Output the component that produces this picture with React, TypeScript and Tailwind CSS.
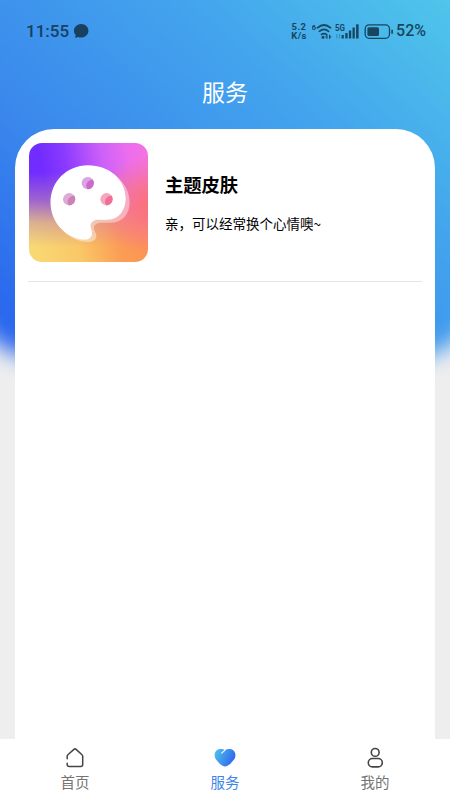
import React, { useState } from 'react';

const HomeIcon = () => (
  <svg width="22" height="22" viewBox="0 0 22 22" fill="none" stroke="#444" strokeWidth="1.5" strokeLinecap="round" strokeLinejoin="round">
    <path d="M3.2 11.8V9.2q0-.9.7-1.5L9.9 2.4q1.100-1 2.200 0l5.900 5.300q.7.6.7 1.500v8.400q0 2-2 2H5.200q-2 0-2-2V16.300" />
  </svg>
);

const HeartIcon = () => (
  <svg width="22" height="22" viewBox="0 0 22 22" fill="none">
    <defs>
      <linearGradient id="heart" x1="0" y1="4" x2="21" y2="14" gradientUnits="userSpaceOnUse">
        <stop stopColor="#4fc4ec" />
        <stop offset=".5" stopColor="#3f94ec" />
        <stop offset="1" stopColor="#2c63ee" />
      </linearGradient>
    </defs>
    <path d="M11 3.200C8.700 1.500 5 1.400 2.700 3.300.2 5.600-.1 9.600 2 12.600c1.700 2.500 4.400 4.900 6.600 6.200q2.400 1.300 4.800 0c2.300-1.300 4.900-3.700 6.600-6.200 2.100-3 1.900-7-.7-9.300C17 1.400 13.300 1.500 11 3.200Z" fill="url(#heart)" />
    <path d="M7.600 6.200 10.800 3.300" stroke="#fff" strokeWidth="1.100" strokeLinecap="round" />
  </svg>
);

const UserIcon = () => (
  <svg width="22" height="22" viewBox="0 0 22 22" fill="none" stroke="#444" strokeWidth="1.600">
    <circle cx="11.200" cy="5.400" r="3.900" />
    <rect x="4.300" y="11.500" width="14" height="8.400" rx="4.200" />
  </svg>
);

const ChatIcon = () => (
  <svg width="16" height="16" viewBox="0 0 16 16" fill="#18405f">
    <path d="M8.200 1C4.200 1 1 4 1 7.700c0 1.800.6 3.200 1.700 4.400L2 15l3.100-1.100c1 .4 2 .6 3.100.6 4 0 7.200-3 7.200-6.800S12.200 1 8.200 1Z" />
  </svg>
);

const WifiIcon = () => (
  <svg width="20" height="17" viewBox="0 0 20 17" fill="none" stroke="#18465f" strokeWidth="1.700" strokeLinecap="round">
    <path d="M5.400 4.800Q12-.8 18.600 4.800M7.400 8.300q4.600-3.700 9.200 0M9.500 11.400q2.500-1.700 5 0" />
    <circle cx="11" cy="14.200" r=".7" fill="#18465f" />
    <path d="M15 12.300v3M17.500 12.300v3" strokeWidth="1" />
    <path d="m14.600 12.500-1 1.300 1 1.300M17.900 12.500l1 1.300-1 1.300" strokeWidth=".9" />
    <text x="-.5" y="6.600" fill="#18465f" stroke="none" fontSize="8" fontWeight="700" fontFamily="Roboto, sans-serif">6</text>
  </svg>
);

const SignalIcon = () => (
  <svg width="24" height="17" viewBox="0 0 24 17" fill="#18465f">
    <text x="0" y="8" fontSize="9.500" fontWeight="700" fontFamily="Roboto, sans-serif" textLength="10" lengthAdjust="spacingAndGlyphs">5G</text>
    <path d="M1.800 11v4.500M4.500 11v4.500" stroke="#18465f" strokeWidth="1.100" opacity=".35" />
    <rect x="6.600" y="12" width="2.200" height="3.500" />
    <rect x="10.300" y="10" width="2.300" height="5.500" />
    <rect x="13.900" y="7.500" width="2.300" height="8" />
    <rect x="17.500" y="4.500" width="2.300" height="11" />
    <rect x="21.100" y="1.300" width="2.500" height="14.200" />
  </svg>
);

const BatteryIcon = () => (
  <svg width="30" height="17" viewBox="0 0 30 17" fill="none">
    <rect x="1.200" y="1.900" width="24.300" height="13.400" rx="4" stroke="#18465f" strokeWidth="1.300" />
    <rect x="3.400" y="4.200" width="11.600" height="8.800" rx="1.600" fill="#18465f" />
    <path d="M28.100 6.700v4" stroke="#18465f" strokeWidth="1.600" />
  </svg>
);

const PaletteImage = () => (
  <svg width="119" height="119" viewBox="0 0 120 120" className="ml-px shrink-0 rounded-[13px]">
    <defs>
      <linearGradient id="top" x1="0" y1="22" x2="120" y2="0" gradientUnits="userSpaceOnUse">
        <stop offset=".1" stopColor="#712cff" />
        <stop offset=".3" stopColor="#8a3aff" />
        <stop offset=".6" stopColor="#cc60f8" />
        <stop offset=".83" stopColor="#ec6eee" />
        <stop offset="1" stopColor="#f572e4" />
      </linearGradient>
      <linearGradient id="bottom" x1="0" y1="110" x2="120" y2="90" gradientUnits="userSpaceOnUse">
        <stop offset=".05" stopColor="#f9d874" />
        <stop offset=".42" stopColor="#fac766" />
        <stop offset=".75" stopColor="#fb9d55" />
        <stop offset="1" stopColor="#fb9551" />
      </linearGradient>
      <linearGradient id="fade" x1="0" y1="0" x2="0" y2="1">
        <stop offset=".25" stopColor="#000" />
        <stop offset=".48" stopColor="#555" />
        <stop offset=".66" stopColor="#c4c4c4" />
        <stop offset=".86" stopColor="#fff" />
      </linearGradient>
      <radialGradient id="coral" cx="122" cy="62" r="52" gradientUnits="userSpaceOnUse">
        <stop stopColor="#fa7078" />
        <stop offset=".3" stopColor="#fa7080" stopOpacity=".75" />
        <stop offset="1" stopColor="#fa7488" stopOpacity="0" />
      </radialGradient>
      <mask id="lower" maskUnits="userSpaceOnUse" x="-2" y="-2" width="124" height="124">
        <rect x="-2" y="-2" width="124" height="124" fill="url(#fade)" />
      </mask>
    </defs>
    <rect width="120" height="106" fill="url(#top)" />
    <rect x="-2" width="124" height="122" fill="url(#bottom)" mask="url(#lower)" />
    <rect width="120" height="120" fill="url(#coral)" />
    <path d="M61 24C83 24 101.500 40 101.500 60c0 12-8 20.500-19 20.500-9 0-14-1-16.500 3-2.500 4 3 7 1.800 11.500-2 7-14 5-21 2C34 92 24 76 24 60 24 40 40 24 61 24Z" fill="#fff" opacity=".42" />
    <path d="M59.500 22.500C81 22.500 97.500 37 97.500 56c0 12-7 21-18 21.500-8 .5-13-1.500-16.500 3-3 4 2 8 .3 12.500-2 6-10.500 5-17 2.500C31 90 21.700 75 21.700 60 21.700 39 38 22.500 59.500 22.500Z" fill="#fff" />
    <circle cx="59.300" cy="40.400" r="6.200" fill="#dba2e8" />
    <circle cx="40.500" cy="56.700" r="6.200" fill="#dcabd6" />
    <circle cx="78.200" cy="56.700" r="6.200" fill="#f7a5c0" />
    <path d="M64.500 37c2.500 4.500-.8 9.500-5.200 9.700-4-4 .2-10 5.200-9.700Z" fill="#ca6acd" />
    <path d="M45.700 53.300c2.500 4.500-.8 9.500-5.200 9.700-4-4 .2-10 5.200-9.700Z" fill="#cf7eb7" />
    <path d="M83.400 53.300c2.500 4.500-.8 9.500-5.200 9.700-4-4 .2-10 5.200-9.700Z" fill="#ef6f96" />
  </svg>
);

const StatusBar = () => (
  <div className="flex h-[62px] items-center pl-[26px] pr-6 font-['Roboto',sans-serif] text-[#18465f]">
    <span className="text-[17px] font-medium leading-5 text-[#18405f]">11:55</span>
    <span className="ml-1">
      <ChatIcon />
    </span>
    <div className="ml-auto flex items-center">
      <div className="mr-1 w-[18px] text-center text-[9.5px] font-bold leading-none tracking-[0.4px]">
        5.2
        <br />
        K/s
      </div>
      <span><WifiIcon /></span>
      <span className="ml-[3px]"><SignalIcon /></span>
      <span className="ml-[5px]"><BatteryIcon /></span>
      <span className="ml-[2px] text-[16px] font-medium leading-5">52%</span>
    </div>
  </div>
);

export default function App() {
  const [currentTab, setCurrentTab] = useState('service');

  const tabs = [
    { id: 'home', label: '首页', icon: <HomeIcon /> },
    { id: 'service', label: '服务', icon: <HeartIcon /> },
    { id: 'mine', label: '我的', icon: <UserIcon /> }
  ];

  return (
    <div className="relative isolate flex h-[800px] w-[450px] flex-col overflow-hidden bg-[#eeeeef] font-['Noto_Sans_CJK_SC',sans-serif]">
      {/* blue backdrop fading out at the bottom */}
      <div className="absolute inset-x-0 top-0 -z-10 h-[410px] overflow-hidden">
        <div className="absolute -inset-x-[30px] -top-10 h-[398px] rounded-b-[70px] bg-[linear-gradient(42deg,#2864ee_6%,#3a88ec_33%,#43a4ed_64%,#50c8ea_94%)] blur-[11px]" />
      </div>

      <StatusBar />
      <header className="flex h-[67px] justify-center pt-3 text-[23px] leading-[34px] text-white">
        <h1>服务</h1>
      </header>

      <main className="mx-[15px] flex-1 rounded-t-[39px] bg-white px-[13px] pt-[14px]">
        <div className="flex h-[139px] border-b border-[#e5e5e5]">
          <PaletteImage />
          <div className="ml-[17px] pt-[28px] text-black">
            <h2 className="text-[18.3px] font-bold leading-[26px]">主题皮肤</h2>
            <p className="mt-[16px] text-[13.5px] leading-5">亲，可以经常换个心情噢~</p>
          </div>
        </div>
      </main>

      <nav className="grid h-[61px] grid-cols-3 bg-white">
        {tabs.map((tab) => (
          <button
            key={tab.id}
            onClick={() => setCurrentTab(tab.id)}
            className={`flex flex-col items-center pt-[8px] text-[14.5px] leading-[22px] ${
              currentTab === tab.id ? 'text-[#3c86e6]' : 'text-[#747474]'
            }`}
          >
            {tab.icon}
            <span className="mt-[2px]">{tab.label}</span>
          </button>
        ))}
      </nav>
    </div>
  );
}
